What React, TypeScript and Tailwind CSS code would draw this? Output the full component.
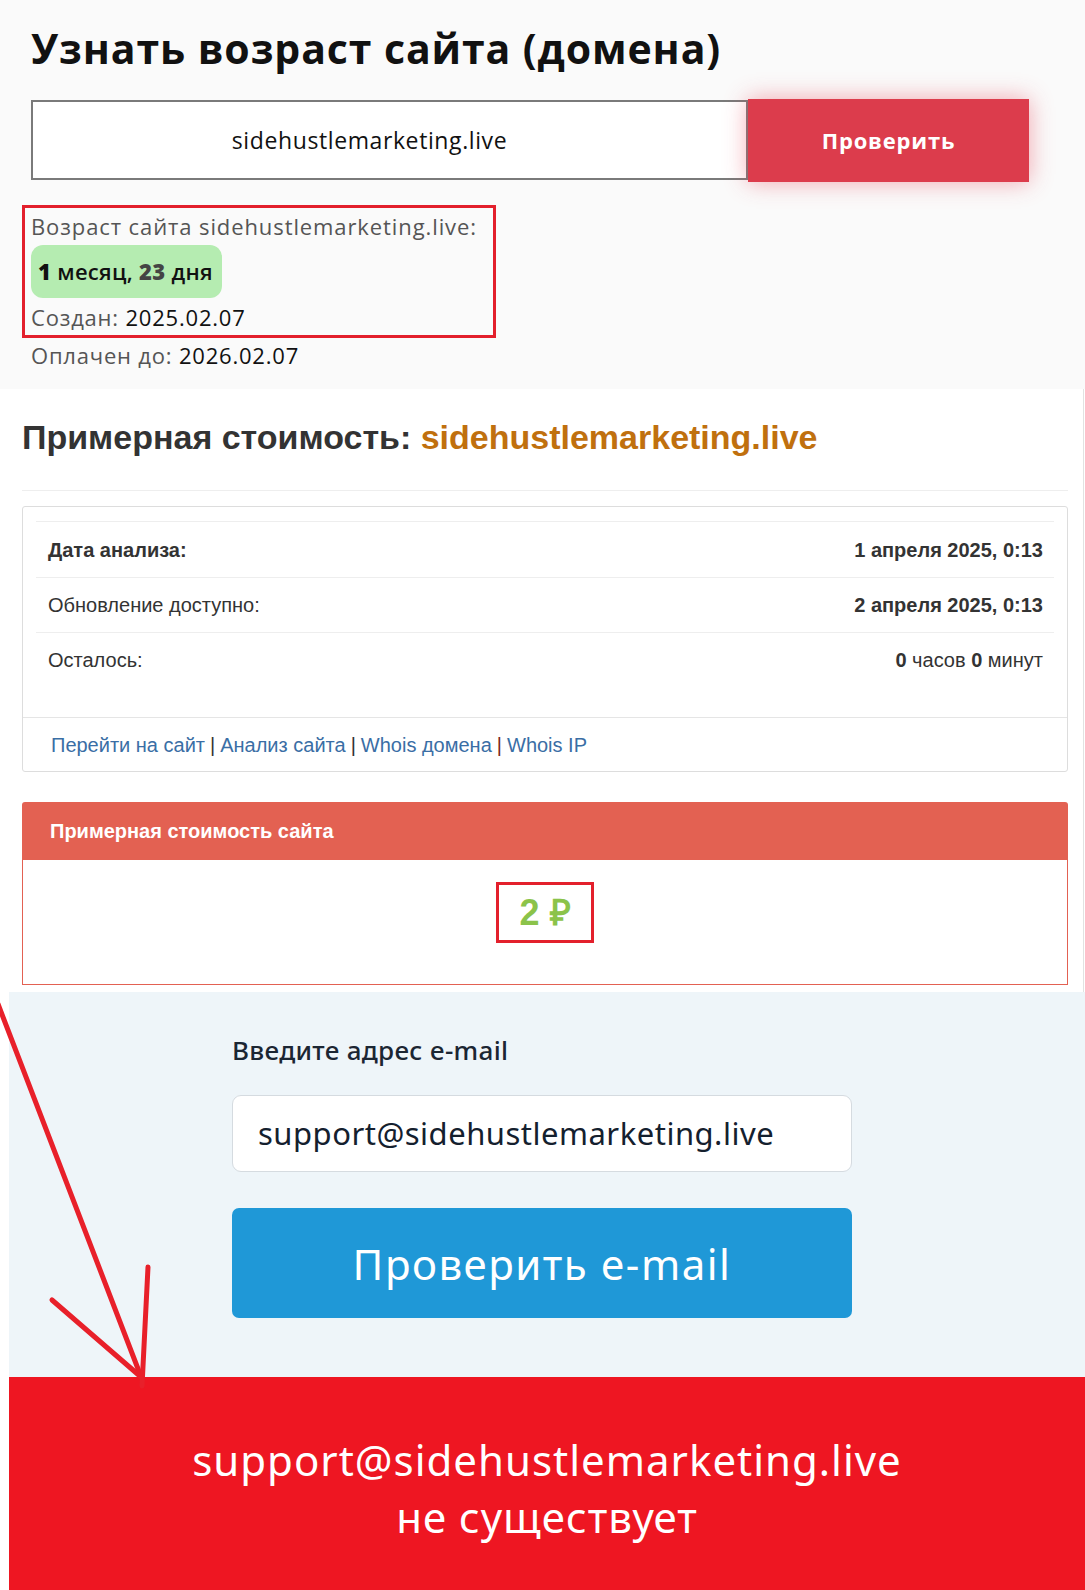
import React from "react";

export default function App() {
  const top = { fontFamily: '"Open Sans", "Noto Sans", sans-serif' };
  const arial = { fontFamily: '"Liberation Sans", Arial, sans-serif' };
  const noto = { fontFamily: '"Noto Sans", "Open Sans", sans-serif' };
  return (
    <div className="relative w-[1085px] h-[1590px] bg-white overflow-hidden">
      {/* Section 1 */}
      <section className="h-[389px] bg-[#fafafa] pl-[31px]" style={top}>
        <h1 className="pt-[24px] text-[41px] leading-[48px] font-bold text-[#111] tracking-[0.9px]">
          Узнать возраст сайта (домена)
        </h1>
        <div className="mt-[27px] flex items-start">
          <div className="mt-[1px] h-[80px] w-[717px] border-2 border-[#7a7a7a] bg-white flex items-center justify-center pr-[40px] text-[23px] tracking-[0.6px] text-[#111]">
            sidehustlemarketing.live
          </div>
          <div className="h-[83px] w-[281px] bg-[#dc3c4c] shadow-[0_0_22px_rgba(230,60,80,0.45)] flex items-center justify-center text-[22px] tracking-[0.8px] font-bold text-white">
            Проверить
          </div>
        </div>
        <div className="ml-[-9px] mt-[23px] w-[474px] border-[3px] border-[#e3202c] pl-[6px] pt-[4px] pb-[4px]">
          <div className="text-[22px] leading-[28px] tracking-[0.9px] text-[#555] whitespace-nowrap">
            Возраст сайта sidehustlemarketing.live:
          </div>
          <div className="mt-[5px] h-[53px] w-[191px] rounded-[12px] bg-[#b5ecb1] flex items-center pl-[7px] text-[22px] tracking-[0.3px] font-semibold text-[#111] whitespace-nowrap">
            <span className="font-extrabold">1</span>&nbsp;месяц,&nbsp;
            <span className="font-extrabold text-[#444]">23</span>&nbsp;дня
          </div>
          <div className="mt-[5px] text-[22px] leading-[28px] tracking-[0.8px] text-[#555]">
            Создан: <span className="text-[#111] font-medium">2025.02.07</span>
          </div>
        </div>
        <div className="mt-[3px] text-[22px] leading-[28px] tracking-[0.8px] text-[#555]">
          Оплачен до: <span className="text-[#111] font-medium">2026.02.07</span>
        </div>
      </section>

      {/* Section 2 */}
      <section className="w-[1084px] border-r border-[#e2e2e2] bg-white pl-[22px] pb-[7px]" style={arial}>
        <h2 className="pt-[28px] text-[34px] leading-[40px] font-bold text-[#333] whitespace-nowrap">
          Примерная стоимость: <span className="text-[#c0700e]">sidehustlemarketing.live</span>
        </h2>
        <div className="mt-[33px] h-px w-[1046px] bg-[#eeeeee]" />
        <div className="mt-[15px] w-[1046px] rounded-[3px] border border-[#dddddd] bg-white">
          <div className="px-[13px] pt-[14px] pb-[30px] text-[20px] text-[#333]">
            <div className="h-[56px] border-t border-[#eeeeee] flex items-center justify-between pl-[12px] pr-[11px]">
              <span className="font-bold">Дата анализа:</span>
              <span className="font-bold">1 апреля 2025, 0:13</span>
            </div>
            <div className="h-[55px] border-t border-[#eeeeee] flex items-center justify-between pl-[12px] pr-[11px]">
              <span>Обновление доступно:</span>
              <span className="font-bold">2 апреля 2025, 0:13</span>
            </div>
            <div className="h-[55px] border-t border-[#eeeeee] flex items-center justify-between pl-[12px] pr-[11px]">
              <span>Осталось:</span>
              <span>
                <span className="font-bold">0</span> часов <span className="font-bold">0</span> минут
              </span>
            </div>
          </div>
          <div className="h-[54px] border-t border-[#e5e5e5] flex items-center pl-[28px] text-[20px] text-[#3a6ea5] whitespace-nowrap">
            <span>Перейти на сайт</span>
            <span className="text-[#333] mx-[5px]">|</span>
            <span>Анализ сайта</span>
            <span className="text-[#333] mx-[5px]">|</span>
            <span>Whois домена</span>
            <span className="text-[#7a2a1a] mx-[5px]">|</span>
            <span>Whois IP</span>
          </div>
        </div>
        <div className="mt-[30px] w-[1046px]">
          <div className="h-[58px] rounded-t-[3px] bg-[#e36152] flex items-center pl-[28px] text-[20px] font-bold text-white">
            Примерная стоимость сайта
          </div>
          <div className="h-[125px] border border-t-0 border-[#e36152] flex justify-center">
            <div className="mt-[22px] h-[61px] w-[98px] border-[3px] border-[#e3202c] flex items-center justify-center text-[36px] font-bold text-[#8bc34a]">
              2 ₽
            </div>
          </div>
        </div>
      </section>

      {/* Section 3 */}
      <section className="ml-[9px] h-[385px] w-[1076px] bg-[#eef5f9] pl-[223px]" style={noto}>
        <div className="pt-[42px] text-[26px] leading-[32px] font-medium text-[#1b2633] tracking-[0.3px]">Введите адрес e-mail</div>
        <div className="mt-[29px] h-[77px] w-[620px] rounded-[9px] border border-[#d5dbe0] bg-white flex items-center pl-[25px] text-[31px] tracking-[0.5px] text-[#14202e] whitespace-nowrap">
          support@sidehustlemarketing.live
        </div>
        <div className="mt-[36px] h-[110px] w-[620px] rounded-[7px] bg-[#1f98d7] flex items-center justify-center text-[42px] tracking-[1.5px] text-white">
          Проверить e-mail
        </div>
      </section>

      {/* Section 4 */}
      <section className="ml-[9px] h-[213px] w-[1076px] bg-[#ee1622] pt-[54px] text-center text-[42px] leading-[57px] tracking-[1px] text-white" style={noto}>
        <div>support@sidehustlemarketing.live</div>
        <div>не существует</div>
      </section>

      {/* Arrow annotation */}
      <svg className="pointer-events-none absolute left-0 top-0" width="1085" height="1590" viewBox="0 0 1085 1590">
        <g stroke="#e8202a" strokeWidth="5" strokeLinecap="round" fill="none">
          <line x1="-2" y1="1004" x2="140" y2="1374" />
          <line x1="52" y1="1300" x2="141" y2="1377" />
          <line x1="148" y1="1267" x2="142" y2="1386" />
        </g>
      </svg>
    </div>
  );
}
